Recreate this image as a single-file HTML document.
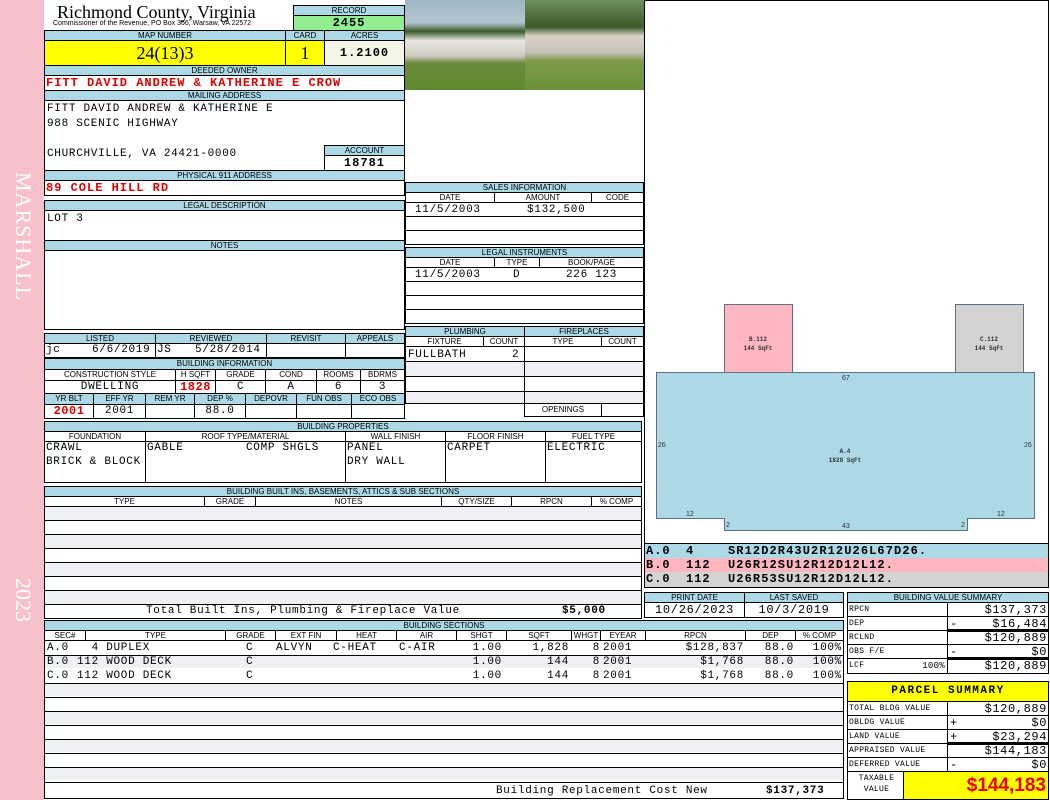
<!DOCTYPE html>
<html><head><meta charset="utf-8"><style>
*{margin:0;padding:0}
body{width:1050px;height:800px;position:relative;background:#fff;overflow:hidden;font-family:"Liberation Mono",monospace}
div{position:absolute;box-sizing:border-box}
.b{border:1px solid #000;background:#fff}
.h{border:1px solid #000;background:#add8e6;font:8px/9px "Liberation Sans",sans-serif;text-align:center;color:#000}
.s{border:1px solid #000;background:#fff;font:8px/9px "Liberation Sans",sans-serif;text-align:center}
.t{font:11px/14px "Liberation Mono",monospace;white-space:pre;color:#000;letter-spacing:.7px}
.r{color:#d00;font-weight:bold;font-size:12px;letter-spacing:1px}
.g{background:#eef0f4}
.ln{height:1px;background:#000}
.sm{font:8px/14px "Liberation Mono",monospace;white-space:pre;letter-spacing:.3px}
.v{font:12px/14px "Liberation Mono",monospace;white-space:pre;text-align:right;letter-spacing:.6px}
.k{font:bold 12px/14px "Liberation Mono",monospace;white-space:pre;letter-spacing:1.1px}
</style></head><body>
<div style="left:0;top:0;width:44px;height:800px;background:#f7c1cc"></div>
<div style="left:8px;top:172px;width:30px;height:160px;"><div style="left:0;top:0;width:160px;height:30px;transform-origin:0 0;transform:translate(30px,0) rotate(90deg);color:#fff;font:22px/30px 'Liberation Serif',serif;letter-spacing:1px">MARSHALL</div></div>
<div style="left:8px;top:578px;width:30px;height:50px;"><div style="left:0;top:0;width:50px;height:30px;transform-origin:0 0;transform:translate(30px,0) rotate(90deg);color:#fff;font:22px/30px 'Liberation Serif',serif">2023</div></div>

<div style="left:57px;top:2px;font:18px/20px 'Liberation Serif',serif">Richmond County, Virginia</div>
<div style="left:53px;top:20px;font:7px/8px 'Liberation Sans',sans-serif">Commissioner of the Revenue, PO Box 366, Warsaw, VA 22572</div>
<div class="h" style="left:293px;top:5px;width:112px;height:11px">RECORD</div>
<div style="left:293px;top:15px;width:112px;height:16px;background:#90ee90;border:1px solid #000;font:bold 12px/14px 'Liberation Mono';text-align:center;letter-spacing:1px">2455</div>
<div class="h" style="left:44px;top:30px;width:242px;height:11px">MAP NUMBER</div>
<div class="h" style="left:285px;top:30px;width:40px;height:11px">CARD</div>
<div class="h" style="left:324px;top:30px;width:81px;height:11px">ACRES</div>
<div style="left:44px;top:40px;width:242px;height:26px;background:#ff0;border:1px solid #000;font:18px/24px 'Liberation Serif',serif;text-align:center">24(13)3</div>
<div style="left:285px;top:40px;width:40px;height:26px;background:#ff0;border:1px solid #000;font:18px/24px 'Liberation Serif',serif;text-align:center">1</div>
<div style="left:324px;top:40px;width:81px;height:26px;background:#f5f5e6;border:1px solid #000;font:bold 12px/24px 'Liberation Mono';text-align:center;letter-spacing:1px">1.2100</div>
<div class="h" style="left:44px;top:65px;width:361px;height:11px">DEEDED OWNER</div>
<div class="b" style="left:44px;top:75px;width:361px;height:16px"></div>
<div class="t r" style="left:46px;top:76px">FITT DAVID ANDREW &amp; KATHERINE E CROW</div>
<div class="h" style="left:44px;top:90px;width:361px;height:11px">MAILING ADDRESS</div>
<div class="b" style="left:44px;top:100px;width:361px;height:71px"></div>
<div class="t" style="left:47px;top:102px;line-height:15px">FITT DAVID ANDREW &amp; KATHERINE E
988 SCENIC HIGHWAY</div>
<div class="t" style="left:47px;top:147px">CHURCHVILLE, VA 24421-0000</div>
<div class="h" style="left:324px;top:145px;width:81px;height:11px">ACCOUNT</div>
<div class="b" style="left:324px;top:155px;width:81px;height:16px;font:bold 12px/14px 'Liberation Mono';text-align:center;letter-spacing:1px">18781</div>
<div class="h" style="left:44px;top:170px;width:361px;height:11px">PHYSICAL 911 ADDRESS</div>
<div class="b" style="left:44px;top:180px;width:361px;height:16px"></div>
<div class="t r" style="left:46px;top:181px">89 COLE HILL RD</div>

<div class="h" style="left:44px;top:200px;width:361px;height:11px">LEGAL DESCRIPTION</div>
<div class="b" style="left:44px;top:210px;width:361px;height:31px"></div>
<div class="t" style="left:47px;top:212px">LOT 3</div>
<div class="h" style="left:44px;top:240px;width:361px;height:11px">NOTES</div>
<div class="b" style="left:44px;top:250px;width:361px;height:80px"></div>

<div class="h" style="left:44px;top:333px;width:112px;height:11px">LISTED</div>
<div class="h" style="left:155px;top:333px;width:112px;height:11px">REVIEWED</div>
<div class="h" style="left:266px;top:333px;width:80px;height:11px">REVISIT</div>
<div class="h" style="left:345px;top:333px;width:60px;height:11px">APPEALS</div>
<div class="b" style="left:44px;top:343px;width:112px;height:15px"></div>
<div class="b" style="left:155px;top:343px;width:112px;height:15px"></div>
<div class="b" style="left:266px;top:343px;width:80px;height:15px"></div>
<div class="b" style="left:345px;top:343px;width:60px;height:15px"></div>
<div class="t" style="left:46px;top:343px">jc</div>
<div class="t" style="left:92px;top:343px">6/6/2019</div>
<div class="t" style="left:157px;top:343px">JS</div>
<div class="t" style="left:195px;top:343px">5/28/2014</div>

<div class="h" style="left:44px;top:358px;width:361px;height:12px">BUILDING INFORMATION</div>
<div class="s" style="left:44px;top:369px;width:132px;height:12px">CONSTRUCTION STYLE</div>
<div class="s" style="left:175px;top:369px;width:41px;height:12px">H SQFT</div>
<div class="s" style="left:215px;top:369px;width:51px;height:12px">GRADE</div>
<div class="s" style="left:265px;top:369px;width:52px;height:12px">COND</div>
<div class="s" style="left:316px;top:369px;width:45px;height:12px">ROOMS</div>
<div class="s" style="left:360px;top:369px;width:45px;height:12px">BDRMS</div>
<div class="b t" style="left:44px;top:380px;width:132px;height:14px;text-align:center;line-height:12px">DWELLING</div>
<div class="b t r" style="left:175px;top:380px;width:41px;height:14px;text-align:center;line-height:12px;letter-spacing:.5px">1828</div>
<div class="b t" style="left:215px;top:380px;width:51px;height:14px;text-align:center;line-height:12px">C</div>
<div class="b t" style="left:265px;top:380px;width:52px;height:14px;text-align:center;line-height:12px">A</div>
<div class="b t" style="left:316px;top:380px;width:45px;height:14px;text-align:center;line-height:12px">6</div>
<div class="b t" style="left:360px;top:380px;width:45px;height:14px;text-align:center;line-height:12px">3</div>
<div class="h" style="left:44px;top:393px;width:50px;height:12px">YR BLT</div>
<div class="h" style="left:93px;top:393px;width:53px;height:12px">EFF YR</div>
<div class="h" style="left:145px;top:393px;width:50px;height:12px">REM YR</div>
<div class="h" style="left:194px;top:393px;width:52px;height:12px">DEP %</div>
<div class="h" style="left:245px;top:393px;width:52px;height:12px">DEPOVR</div>
<div class="h" style="left:296px;top:393px;width:56px;height:12px">FUN OBS</div>
<div class="h" style="left:351px;top:393px;width:54px;height:12px">ECO OBS</div>
<div class="b t r" style="left:44px;top:404px;width:50px;height:15px;text-align:center;line-height:13px;letter-spacing:.5px">2001</div>
<div class="b t" style="left:93px;top:404px;width:53px;height:15px;text-align:center;line-height:13px">2001</div>
<div class="b" style="left:145px;top:404px;width:50px;height:15px"></div>
<div class="b t" style="left:194px;top:404px;width:52px;height:15px;text-align:center;line-height:13px">88.0</div>
<div class="b" style="left:245px;top:404px;width:52px;height:15px"></div>
<div class="b" style="left:296px;top:404px;width:56px;height:15px"></div>
<div class="b" style="left:351px;top:404px;width:54px;height:15px"></div>

<div style="left:405px;top:0;width:120px;height:90px;background:linear-gradient(#9cb6c4 0%,#b4c6d0 25%,#3a5a2a 35%,#e8e6df 45%,#cfcac2 62%,#6b8a3c 70%,#5f8a2f 100%)"></div>
<div style="left:525px;top:0;width:119px;height:90px;background:linear-gradient(#6e8e5c 0%,#3d5a2a 30%,#d8d2c8 40%,#c9c2b8 58%,#7c9a4a 68%,#6d9238 100%)"></div>

<div class="h" style="left:405px;top:182px;width:239px;height:11px">SALES INFORMATION</div>
<div class="s" style="left:405px;top:192px;width:90px;height:11px">DATE</div>
<div class="s" style="left:494px;top:192px;width:98px;height:11px">AMOUNT</div>
<div class="s" style="left:591px;top:192px;width:53px;height:11px">CODE</div>
<div class="b" style="left:405px;top:202px;width:239px;height:15px"></div>
<div class="t" style="left:415px;top:203px">11/5/2003</div>
<div class="t" style="left:527px;top:203px">$132,500</div>
<div class="b" style="left:405px;top:216px;width:239px;height:15px"></div>
<div class="b" style="left:405px;top:230px;width:239px;height:15px"></div>
<div class="h" style="left:405px;top:247px;width:239px;height:11px">LEGAL INSTRUMENTS</div>
<div class="s" style="left:405px;top:257px;width:90px;height:11px">DATE</div>
<div class="s" style="left:494px;top:257px;width:46px;height:11px">TYPE</div>
<div class="s" style="left:539px;top:257px;width:105px;height:11px">BOOK/PAGE</div>
<div class="b" style="left:405px;top:267px;width:239px;height:15px"></div>
<div class="t" style="left:415px;top:268px">11/5/2003</div>
<div class="t" style="left:513px;top:268px">D</div>
<div class="t" style="left:566px;top:268px">226 123</div>
<div class="b" style="left:405px;top:281px;width:239px;height:15px"></div>
<div class="b" style="left:405px;top:295px;width:239px;height:15px"></div>
<div class="b" style="left:405px;top:309px;width:239px;height:15px"></div>

<div class="h" style="left:405px;top:326px;width:120px;height:11px">PLUMBING</div>
<div class="h" style="left:524px;top:326px;width:120px;height:11px">FIREPLACES</div>
<div class="s" style="left:405px;top:336px;width:79px;height:11px">FIXTURE</div>
<div class="s" style="left:483px;top:336px;width:42px;height:11px">COUNT</div>
<div class="s" style="left:524px;top:336px;width:78px;height:11px">TYPE</div>
<div class="s" style="left:601px;top:336px;width:43px;height:11px">COUNT</div>
<div class="b" style="left:405px;top:346px;width:120px;height:16px"></div>
<div class="t" style="left:408px;top:348px">FULLBATH</div>
<div class="t" style="left:512px;top:348px">2</div>
<div class="b g" style="left:405px;top:361px;width:120px;height:16px"></div>
<div class="b" style="left:405px;top:376px;width:120px;height:16px"></div>
<div class="b g" style="left:405px;top:391px;width:120px;height:13px"></div>
<div class="b" style="left:524px;top:346px;width:120px;height:16px"></div>
<div class="b g" style="left:524px;top:361px;width:120px;height:16px"></div>
<div class="b" style="left:524px;top:376px;width:120px;height:16px"></div>
<div class="b g" style="left:524px;top:391px;width:120px;height:13px"></div>
<div class="s" style="left:524px;top:403px;width:78px;height:14px;line-height:12px">OPENINGS</div>
<div class="b" style="left:601px;top:403px;width:43px;height:14px"></div>

<div class="h" style="left:44px;top:421px;width:598px;height:11px">BUILDING PROPERTIES</div>
<div class="s" style="left:44px;top:431px;width:102px;height:11px">FOUNDATION</div>
<div class="s" style="left:145px;top:431px;width:201px;height:11px">ROOF TYPE/MATERIAL</div>
<div class="s" style="left:345px;top:431px;width:101px;height:11px">WALL FINISH</div>
<div class="s" style="left:445px;top:431px;width:101px;height:11px">FLOOR FINISH</div>
<div class="s" style="left:545px;top:431px;width:97px;height:11px">FUEL TYPE</div>
<div class="b" style="left:44px;top:441px;width:102px;height:42px"></div>
<div class="b" style="left:145px;top:441px;width:201px;height:42px"></div>
<div class="b" style="left:345px;top:441px;width:101px;height:42px"></div>
<div class="b" style="left:445px;top:441px;width:101px;height:42px"></div>
<div class="b" style="left:545px;top:441px;width:97px;height:42px"></div>
<div class="t" style="left:46px;top:441px">CRAWL
BRICK &amp; BLOCK</div>
<div class="t" style="left:147px;top:441px">GABLE</div>
<div class="t" style="left:246px;top:441px">COMP SHGLS</div>
<div class="t" style="left:347px;top:441px">PANEL
DRY WALL</div>
<div class="t" style="left:447px;top:441px">CARPET</div>
<div class="t" style="left:547px;top:441px">ELECTRIC</div>

<div class="h" style="left:44px;top:486px;width:598px;height:11px">BUILDING BUILT INS, BASEMENTS, ATTICS &amp; SUB SECTIONS</div>
<div class="s" style="left:44px;top:496px;width:161px;height:11px">TYPE</div>
<div class="s" style="left:204px;top:496px;width:52px;height:11px">GRADE</div>
<div class="s" style="left:255px;top:496px;width:187px;height:11px">NOTES</div>
<div class="s" style="left:441px;top:496px;width:71px;height:11px">QTY/SIZE</div>
<div class="s" style="left:511px;top:496px;width:81px;height:11px">RPCN</div>
<div class="s" style="left:591px;top:496px;width:51px;height:11px">% COMP</div>
<div class="b g" style="left:44px;top:506px;width:598px;height:15px"></div>
<div class="b" style="left:44px;top:520px;width:598px;height:15px"></div>
<div class="b g" style="left:44px;top:534px;width:598px;height:15px"></div>
<div class="b" style="left:44px;top:548px;width:598px;height:15px"></div>
<div class="b g" style="left:44px;top:562px;width:598px;height:15px"></div>
<div class="b" style="left:44px;top:576px;width:598px;height:15px"></div>
<div class="b g" style="left:44px;top:590px;width:598px;height:15px"></div>
<div class="b" style="left:44px;top:604px;width:598px;height:15px"></div>
<div class="t" style="left:146px;top:604px">Total Built Ins, Plumbing &amp; Fireplace Value</div>
<div class="t" style="left:562px;top:604px;font-weight:bold">$5,000</div>

<div class="h" style="left:44px;top:620px;width:800px;height:11px">BUILDING SECTIONS</div>
<div class="s" style="left:44px;top:630px;width:42px;height:11px">SEC#</div>
<div class="s" style="left:85px;top:630px;width:141px;height:11px">TYPE</div>
<div class="s" style="left:225px;top:630px;width:51px;height:11px">GRADE</div>
<div class="s" style="left:275px;top:630px;width:62px;height:11px">EXT FIN</div>
<div class="s" style="left:336px;top:630px;width:61px;height:11px">HEAT</div>
<div class="s" style="left:396px;top:630px;width:61px;height:11px">AIR</div>
<div class="s" style="left:456px;top:630px;width:51px;height:11px">SHGT</div>
<div class="s" style="left:506px;top:630px;width:66px;height:11px">SQFT</div>
<div class="s" style="left:571px;top:630px;width:30px;height:11px">WHGT</div>
<div class="s" style="left:600px;top:630px;width:46px;height:11px">EYEAR</div>
<div class="s" style="left:645px;top:630px;width:101px;height:11px">RPCN</div>
<div class="s" style="left:745px;top:630px;width:51px;height:11px">DEP</div>
<div class="s" style="left:795px;top:630px;width:49px;height:11px">% COMP</div>
<div class="b" style="left:44px;top:640px;width:800px;height:159px"></div>
<div class="g" style="left:45px;top:656px;width:798px;height:12px"></div>
<div class="g" style="left:45px;top:684px;width:798px;height:12px"></div>
<div class="g" style="left:45px;top:712px;width:798px;height:12px"></div>
<div class="g" style="left:45px;top:740px;width:798px;height:12px"></div>
<div class="g" style="left:45px;top:768px;width:798px;height:12px"></div>
<div class="ln" style="left:44px;top:655px;width:800px"></div>
<div class="ln" style="left:44px;top:683px;width:800px"></div>
<div class="ln" style="left:44px;top:697px;width:800px"></div>
<div class="ln" style="left:44px;top:711px;width:800px"></div>
<div class="ln" style="left:44px;top:725px;width:800px"></div>
<div class="ln" style="left:44px;top:739px;width:800px"></div>
<div class="ln" style="left:44px;top:753px;width:800px"></div>
<div class="ln" style="left:44px;top:767px;width:800px"></div>
<div class="ln" style="left:44px;top:782px;width:800px"></div>
<div class="t" style="left:47px;top:641px">A.0
B.0
C.0</div>
<div class="t" style="left:77px;top:641px">  4 DUPLEX
112 WOOD DECK
112 WOOD DECK</div>
<div class="t" style="left:246px;top:641px">C
C
C</div>
<div class="t" style="left:276px;top:641px">ALVYN</div>
<div class="t" style="left:333px;top:641px">C-HEAT</div>
<div class="t" style="left:399px;top:641px">C-AIR</div>
<div class="t" style="left:430px;top:641px;width:72px;text-align:right">1.00
1.00
1.00</div>
<div class="t" style="left:500px;top:641px;width:69px;text-align:right">1,828
144
144</div>
<div class="t" style="left:570px;top:641px;width:30px;text-align:right">8
8
8</div>
<div class="t" style="left:603px;top:641px">2001
2001
2001</div>
<div class="t" style="left:650px;top:641px;width:94px;text-align:right">$128,837
$1,768
$1,768</div>
<div class="t" style="left:750px;top:641px;width:44px;text-align:right">88.0
88.0
88.0</div>
<div class="t" style="left:800px;top:641px;width:42px;text-align:right">100%
100%
100%</div>
<div class="t" style="left:496px;top:784px">Building Replacement Cost New</div>
<div class="t" style="left:766px;top:784px;font-weight:bold">$137,373</div>

<div class="b" style="left:644px;top:0;width:405px;height:544px"></div>
<svg style="position:absolute;left:0;top:0" width="1050" height="800">
<rect x="724.5" y="304.5" width="68" height="68" fill="#ffb6c1" stroke="#607080"/>
<rect x="955.5" y="304.5" width="68" height="68" fill="#d3d3d3" stroke="#607080"/>
<polygon points="656.5,372.5 1034.5,372.5 1034.5,518.5 967.5,518.5 967.5,530.5 724.5,530.5 724.5,518.5 656.5,518.5" fill="#add8e6" stroke="#607080"/>
<g font-family="Liberation Mono" font-size="6" font-weight="bold" text-anchor="middle" fill="#333">
<text x="758" y="341">B.112</text><text x="758" y="350">144 SqFt</text>
<text x="989" y="341">C.112</text><text x="989" y="350">144 SqFt</text>
<text x="845" y="453">A.4</text><text x="845" y="462">1828 SqFt</text></g>
<g font-family="Liberation Sans" font-size="7" fill="#333">
<text x="842" y="380">67</text><text x="658" y="447">26</text><text x="1024" y="447">26</text>
<text x="686" y="516">12</text><text x="997" y="516">12</text><text x="726" y="527">2</text><text x="961" y="527">2</text><text x="842" y="528">43</text></g>
</svg>
<div class="b" style="left:644px;top:543px;width:405px;height:45px"></div>
<div style="left:645px;top:544px;width:403px;height:14px;background:#add8e6"></div>
<div style="left:645px;top:558px;width:403px;height:14px;background:#ffb6c1"></div>
<div style="left:645px;top:572px;width:403px;height:15px;background:#d3d3d3"></div>
<div class="k" style="left:646px;top:544px;letter-spacing:1px">A.0
B.0
C.0</div>
<div class="k" style="left:686px;top:544px;letter-spacing:1px">4
112
112</div>
<div class="k" style="left:728px;top:544px">SR12D2R43U2R12U26L67D26.
U26R12SU12R12D12L12.
U26R53SU12R12D12L12.</div>

<div class="h" style="left:644px;top:592px;width:101px;height:11px">PRINT DATE</div>
<div class="h" style="left:744px;top:592px;width:100px;height:11px">LAST SAVED</div>
<div class="b t" style="left:644px;top:602px;width:101px;height:16px;text-align:center;font-size:12px">10/26/2023</div>
<div class="b t" style="left:744px;top:602px;width:100px;height:16px;text-align:center;font-size:12px">10/3/2019</div>

<div class="h" style="left:847px;top:592px;width:202px;height:11px">BUILDING VALUE SUMMARY</div>
<div class="b" style="left:847px;top:602px;width:101px;height:72px"></div>
<div class="b" style="left:947px;top:602px;width:102px;height:72px"></div>
<div class="ln" style="left:847px;top:616px;width:202px"></div>
<div class="ln" style="left:847px;top:630px;width:202px"></div>
<div class="ln" style="left:847px;top:644px;width:202px"></div>
<div class="ln" style="left:847px;top:658px;width:202px"></div>
<div class="ln" style="left:947px;top:629px;width:102px;height:3px"></div>
<div class="ln" style="left:947px;top:657px;width:102px;height:3px"></div>
<div class="sm" style="left:849px;top:603px">RPCN
DEP
RCLND
OBS F/E
LCF</div>
<div class="sm" style="left:880px;top:659px;width:65px;text-align:right;font-size:9px">100%</div>
<div class="v" style="left:950px;top:603px">
-

-</div>
<div class="v" style="left:950px;top:603px;width:97px">$137,373
$16,484
$120,889
$0
$120,889</div>

<div style="left:847px;top:681px;width:202px;height:21px;background:#ff0;border:1px solid #000;font:bold 11px/19px 'Liberation Mono';text-align:center;letter-spacing:1.5px">PARCEL SUMMARY</div>
<div class="b" style="left:847px;top:701px;width:57px;height:99px"></div>
<div class="b" style="left:847px;top:701px;width:101px;height:71px"></div>
<div class="b" style="left:947px;top:701px;width:102px;height:71px"></div>
<div class="ln" style="left:847px;top:715px;width:202px"></div>
<div class="ln" style="left:847px;top:729px;width:202px"></div>
<div class="ln" style="left:847px;top:743px;width:202px"></div>
<div class="ln" style="left:847px;top:757px;width:202px"></div>
<div class="ln" style="left:947px;top:742px;width:102px;height:3px"></div>
<div class="sm" style="left:849px;top:702px">TOTAL BLDG VALUE
OBLDG VALUE
LAND VALUE
APPRAISED VALUE
DEFERRED VALUE</div>
<div class="v" style="left:950px;top:702px">
+
+

-</div>
<div class="v" style="left:950px;top:702px;width:97px">$120,889
$0
$23,294
$144,183
$0</div>
<div class="sm" style="left:849px;top:773px;width:55px;text-align:center;line-height:11px">TAXABLE
VALUE</div>
<div style="left:903px;top:771px;width:146px;height:29px;background:#ff0;border:1px solid #000;color:#e00;font:bold 19px/27px 'Liberation Sans',sans-serif;text-align:right;padding-right:2px">$144,183</div>
</body></html>
